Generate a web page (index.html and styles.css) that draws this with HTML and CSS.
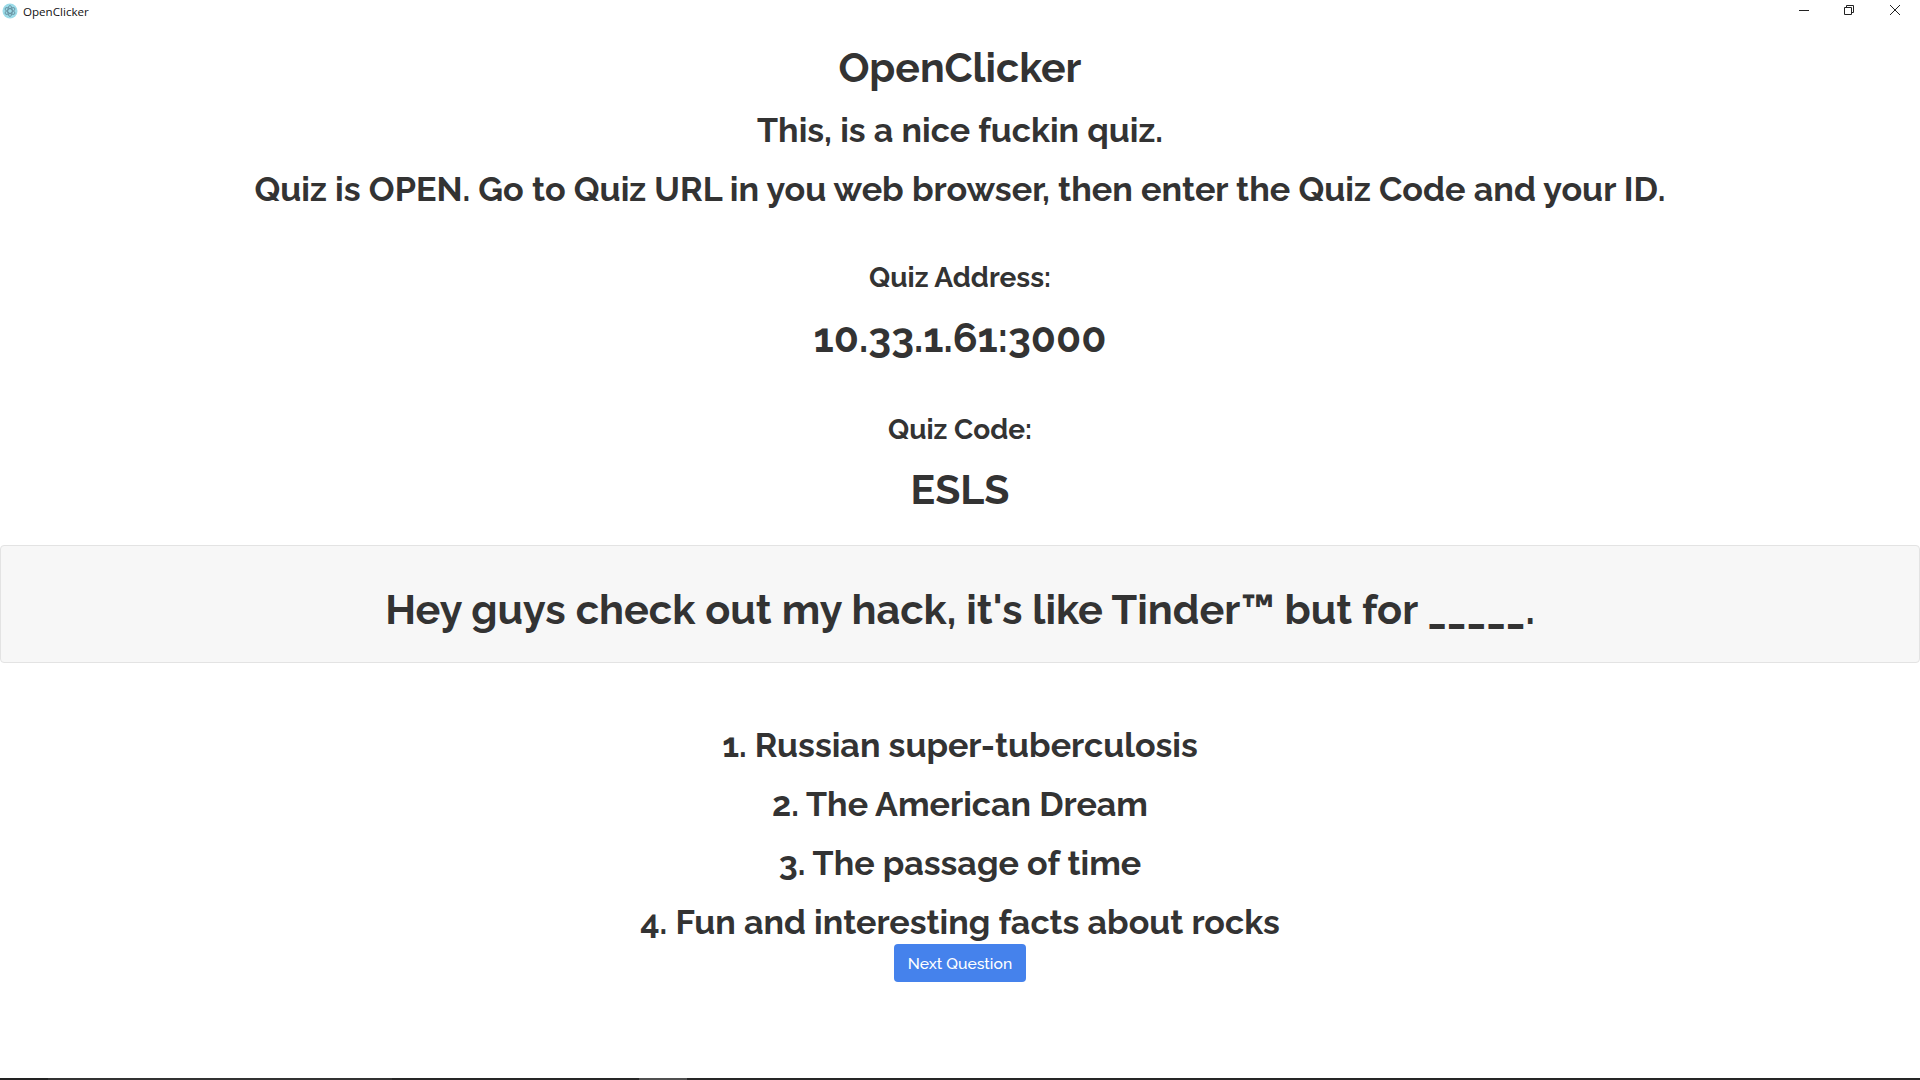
FILE: index.html
```html
<!DOCTYPE html>
<html lang="en">
<head>
<meta charset="utf-8">
<title>OpenClicker</title>
<link rel="stylesheet" href="styles.css">
</head>
<body>
<header class="titlebar">
  <div class="app">
    <svg class="app-icon" width="16" height="16" viewBox="0 0 16 16"><circle cx="8" cy="8" r="7.5" fill="#9bdbe8"/><g fill="none" stroke="#5f8797" stroke-width=".8"><ellipse cx="8" cy="8" rx="5.500" ry="2.200" transform="rotate(30 8 8)"/><ellipse cx="8" cy="8" rx="5.500" ry="2.200" transform="rotate(-30 8 8)"/><ellipse cx="8" cy="8" rx="5.500" ry="2.200" transform="rotate(90 8 8)"/></g></svg>
    <span class="app-name">OpenClicker</span>
  </div>
  <div class="win-controls">
    <svg class="win-btn" width="45" height="20" viewBox="0 0 45 20"><path d="M17 10.500h10" stroke="#222" fill="none"/></svg>
    <svg class="win-btn" width="45" height="20" viewBox="0 0 45 20"><path d="M17.500 7.500h7v7h-7zM19.500 7.500v-2h7v7h-2" stroke="#222" fill="none"/></svg>
    <svg class="win-btn" width="46" height="20" viewBox="0 0 46 20"><path d="M18 5l10 10M28 5l-10 10" stroke="#222" fill="none"/></svg>
  </div>
</header>
<main class="content">
  <h1 class="title">OpenClicker</h1>
  <h2 class="sub">This, is a nice fuckin quiz.</h2>
  <h2 class="sub wide">Quiz is OPEN. Go to Quiz URL in you web browser, then enter the Quiz Code and your ID.</h2>
  <h3 class="label first">Quiz Address:</h3>
  <h1 class="value">10.33.1.61:3000</h1>
  <h3 class="label second">Quiz Code:</h3>
  <h1 class="value">ESLS</h1>
  <div class="question"><h1 class="q-text">Hey guys check out my hack, it's like Tinder™ but for _____.</h1></div>
  <ol class="answers">
    <li>1. Russian super-tuberculosis</li>
    <li>2. The American Dream</li>
    <li>3. The passage of time</li>
    <li>4. Fun and interesting facts about rocks</li>
  </ol>
  <button class="next">Next Question</button>
</main>
<div class="bottom"><span class="seg-a"></span><span class="seg-b"></span><span class="seg-c"></span><span class="seg-d"></span><span class="seg-e"></span></div>
</body>
</html>
```
FILE: styles.css
```css
* { box-sizing: border-box; }
html, body { margin: 0; height: 100%; }
body {
  height: 1080px; overflow: hidden; background: #fff; color: #333;
  font-family: "Raleway", "Lato", "Open Sans", "Liberation Sans", sans-serif;
  display: flex; flex-direction: column;
}
.titlebar { height: 22px; display: flex; justify-content: space-between; align-items: flex-start; flex: none; }
.app { display: flex; align-items: center; gap: 5px; padding: 3px 0 0 2px; }
.app-name { font: 11.600px "Open Sans", sans-serif; color: #111; }
.win-controls { display: flex; padding-right: 2px; }
.content { flex: 1; display: flex; flex-direction: column; align-items: center; text-align: center; }
h1, h2, h3 { margin: 0; font-weight: 700; }
.title { font-size: 41px; line-height: 44px; margin-top: 24px; }
.sub { font-size: 34px; line-height: 38px; margin-top: 21px; }
.sub.wide { font-size: 34.150px; }
.label { font-size: 28px; line-height: 30px; }
.label.first { margin-top: 55px; }
.label.second { margin-top: 55px; }
.value { font-size: 41px; line-height: 44px; margin-top: 23px; }
.question { align-self: stretch; height: 118px; margin-top: 33px; background: #f7f7f7; border: 1px solid #e3e3e3; border-radius: 4px; display: flex; align-items: center; justify-content: center; padding-top: 12px; }
.q-text { font-size: 41.400px; line-height: 44px; }
.answers { list-style: none; margin: 63px 0 0; padding: 0; display: flex; flex-direction: column; gap: 21px; font-size: 34px; line-height: 38px; font-weight: 700; }
.next { margin-top: 3px; width: 132px; height: 38px; border: 0; border-radius: 4px; background: #4582ec; color: #fff; font: 500 15.700px "Raleway", sans-serif; }
.bottom { height: 2px; flex: none; display: flex; background: #222; }
.seg-a { width: 48px; background: #222; }
.seg-b { width: 344px; background: #333; }
.seg-c { width: 247px; background: #262626; }
.seg-d { width: 48px; background: #505050; }
.seg-e { flex: 1; background: #262626; }
```
